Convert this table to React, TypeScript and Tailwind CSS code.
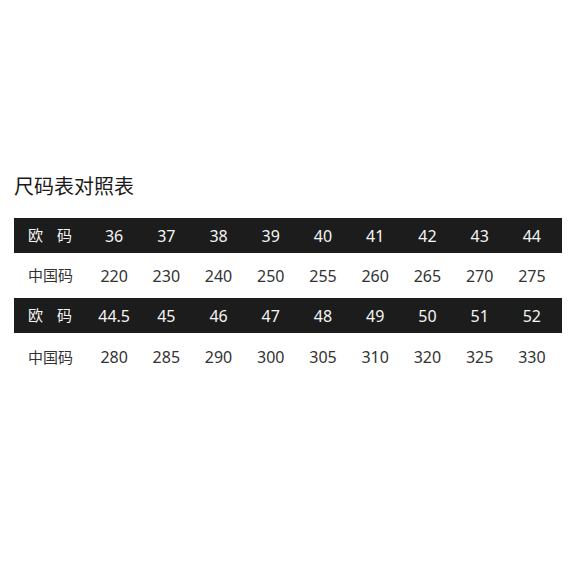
const rows: { label: string; values: string[]; dark: boolean }[] = [
  { label: '欧码', values: ['36', '37', '38', '39', '40', '41', '42', '43', '44'], dark: true },
  { label: '中国码', values: ['220', '230', '240', '250', '255', '260', '265', '270', '275'], dark: false },
  { label: '欧码', values: ['44.5', '45', '46', '47', '48', '49', '50', '51', '52'], dark: true },
  { label: '中国码', values: ['280', '285', '290', '300', '305', '310', '320', '325', '330'], dark: false },
]

const heights = ['h-[35px]', 'h-[45px]', 'h-[35px]', 'h-[48px]']

export default function App() {
  return (
    <div
      className="min-h-[573px] w-[573px] bg-white px-[14px] pt-[173px]"
      style={{ fontFamily: '"Noto Sans", "Noto Sans CJK SC", sans-serif' }}
    >
      <h1 className="text-[20px] leading-[28px] text-[#1a1a1a]">尺码表对照表</h1>
      <div className="mt-[17px] w-[548px]">
        {rows.map((r, i) => (
          <div
            key={i}
            className={`flex items-center pr-[4px] ${heights[i]} ${
              r.dark ? 'bg-[#1c1c1c] text-[#f5f5f5]' : 'bg-white text-[#333333]'
            }`}
          >
            <div className="w-[74px] pl-[14px] text-[15px]">
              {r.dark ? (
                <div className="flex w-[44px] justify-between">
                  <span>欧</span>
                  <span>码</span>
                </div>
              ) : (
                <span>{r.label}</span>
              )}
            </div>
            {r.values.map((v) => (
              <div key={v} className="flex-1 text-center text-[16px]">
                {v}
              </div>
            ))}
          </div>
        ))}
      </div>
    </div>
  )
}
